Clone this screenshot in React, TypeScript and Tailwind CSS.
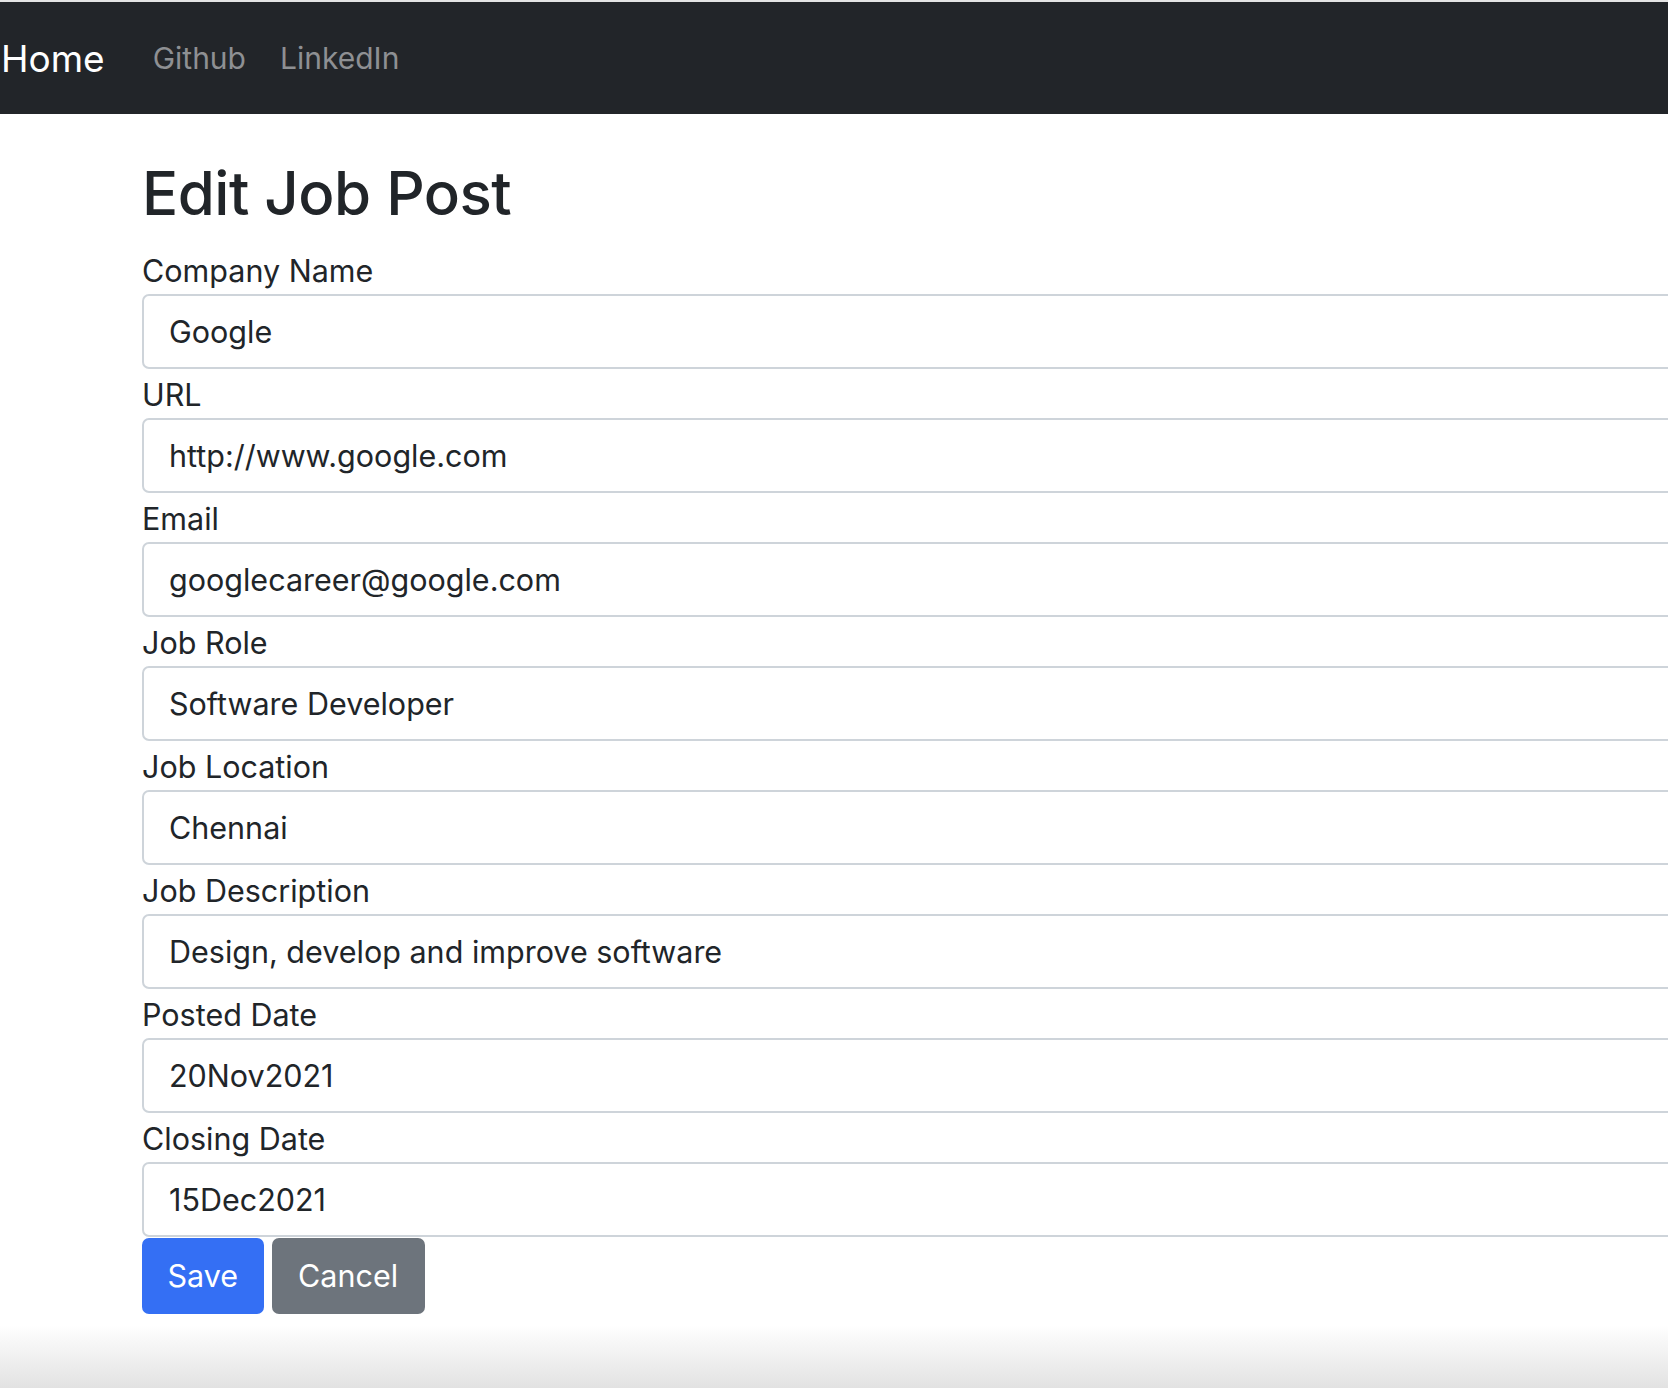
import React from "react";

const FIELDS = [
    { label: "Company Name", value: "Google" },
    { label: "URL", value: "http://www.google.com" },
    { label: "Email", value: "googlecareer@google.com" },
    { label: "Job Role", value: "Software Developer" },
    { label: "Job Location", value: "Chennai" },
    { label: "Job Description", value: "Design, develop and improve software" },
    { label: "Posted Date", value: "20Nov2021" },
    { label: "Closing Date", value: "15Dec2021" },
];

export default function App() {
    return (
        <div className="h-[1388px] overflow-hidden flex flex-col bg-white text-[#212529] font-['Inter',sans-serif]">
            {/* Navbar */}
            <div className="h-[2px] bg-[#e4e4e4]" />
            <nav className="h-[112px] shrink-0 bg-[#222529] flex items-center">
                <a href="#" className="text-[37px] text-white pl-[1px] pr-[48px] leading-none">
                    Home
                </a>
                <a href="#" className="text-[30px] text-[#8e9093] pr-[34px] leading-none">
                    Github
                </a>
                <a href="#" className="text-[30px] text-[#8e9093] leading-none">
                    LinkedIn
                </a>
            </nav>

            {/* Form */}
            <main className="pl-[142px] w-[1700px] shrink-0 flex flex-col">
                <h2 className="text-[60px] font-medium leading-[73px] mt-[43px] mb-[15px] tracking-[-0.5px]">
                    Edit Job Post
                </h2>
                <form className="flex flex-col">
                    {FIELDS.map(field => (
                        <div key={field.label} className="flex flex-col">
                            <label className="h-[49px] pt-[3px] text-[30.5px] leading-[46px]">{field.label}</label>
                            <input
                                type="text"
                                defaultValue={field.value}
                                className="h-[75px] w-full border-2 border-[#ced4da] rounded-[7px] px-[25px] text-[30.5px] text-[#212529] bg-white outline-none"
                            />
                        </div>
                    ))}
                    <div className="flex gap-[8px] mt-[1px]">
                        <button type="button" className="h-[76px] px-[25.5px] rounded-[7px] bg-[#346ff4] text-white text-[30.5px]">
                            Save
                        </button>
                        <button type="button" className="h-[76px] px-[26.5px] rounded-[7px] bg-[#6d747c] text-white text-[30.5px]">
                            Cancel
                        </button>
                    </div>
                </form>
            </main>

            {/* Window shadow at bottom */}
            <div className="flex-1 bg-gradient-to-b from-white from-15% to-[#e2e2e2]" />
        </div>
    );
}
